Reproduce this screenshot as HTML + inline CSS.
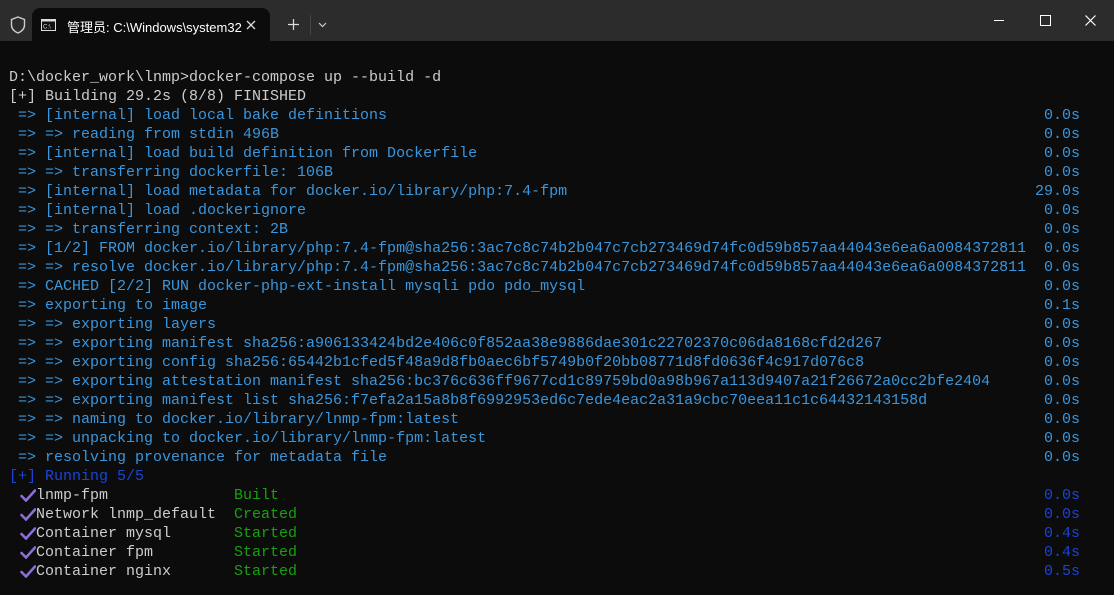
<!DOCTYPE html>
<html><head><meta charset="utf-8"><style>
html,body{margin:0;padding:0;background:#0c0c0c;width:1114px;height:595px;overflow:hidden}
#tb{position:absolute;left:0;top:0;width:1114px;height:41px;background:#2c2c2c}
#tab{position:absolute;left:32px;top:8px;width:238px;height:33px;background:#0c0c0c;border-radius:8px 8px 0 0}
.t{position:absolute;font-family:"Liberation Sans","Noto Sans CJK SC",sans-serif;font-size:13px;color:#fff}
#term{position:absolute;left:0;top:68px;width:1114px;font-family:"Liberation Mono",monospace;font-size:15px;line-height:19px;color:#cccccc}
.r{position:relative;height:19px;white-space:pre;padding-left:9px}
.b{color:#3a96dd}.d{color:#1a44d6}.g{color:#16a10e}
.tm{position:absolute;right:34px;top:0}
.ck{position:absolute;left:20px;top:3px}
.st{position:absolute;left:234px;top:0}
</style></head><body>
<div id="tb">
<svg style="position:absolute;left:10px;top:16px" width="16" height="18" viewBox="0 0 16 18"><path d="M8 1 L14.5 3.5 V9 C14.5 13 11.5 15.5 8 17 C4.5 15.5 1.5 13 1.5 9 V3.5 Z" fill="none" stroke="#ccc" stroke-width="1.4"/></svg>
<div id="tab"></div>
<svg style="position:absolute;left:41px;top:19px" width="15" height="12" viewBox="0 0 15 12"><rect x="0.5" y="0.5" width="14" height="11" fill="#111" stroke="#ddd"/><rect x="0.5" y="0.5" width="14" height="2" fill="#ddd"/><text x="2" y="9.5" font-size="6" fill="#ddd" font-family="Liberation Sans">C:\</text></svg>
<div class="t" style="left:67px;top:17px">管理员: C:\Windows\system32</div>
<svg style="position:absolute;left:246px;top:20px" width="10" height="10"><path d="M1 1L9 9M9 1L1 9" stroke="#ddd" stroke-width="1.3"/></svg>
<svg style="position:absolute;left:288px;top:19px" width="11" height="11"><path d="M5.5 0V11M0 5.5H11" stroke="#ddd" stroke-width="1.2"/></svg>
<div style="position:absolute;left:310px;top:15px;width:1px;height:20px;background:#444"></div>
<svg style="position:absolute;left:318px;top:22px" width="9" height="6"><path d="M1 1L4.5 4.5L8 1" fill="none" stroke="#ccc" stroke-width="1.2"/></svg>
<div style="position:absolute;left:994px;top:20px;width:10px;height:1px;background:#fff"></div>
<div style="position:absolute;left:1040px;top:15px;width:9px;height:9px;border:1px solid #fff"></div>
<svg style="position:absolute;left:1085px;top:15px" width="11" height="11"><path d="M0.5 0.5L10.5 10.5M10.5 0.5L0.5 10.5" stroke="#fff" stroke-width="1.2"/></svg>
</div>
<div id="term">
<div class="r">D:\docker_work\lnmp&gt;docker-compose up --build -d</div>
<div class="r">[+] Building 29.2s (8/8) FINISHED</div>
<div class="r b"> =&gt; [internal] load local bake definitions<span class="tm">0.0s</span></div>
<div class="r b"> =&gt; =&gt; reading from stdin 496B<span class="tm">0.0s</span></div>
<div class="r b"> =&gt; [internal] load build definition from Dockerfile<span class="tm">0.0s</span></div>
<div class="r b"> =&gt; =&gt; transferring dockerfile: 106B<span class="tm">0.0s</span></div>
<div class="r b"> =&gt; [internal] load metadata for docker.io/library/php:7.4-fpm<span class="tm">29.0s</span></div>
<div class="r b"> =&gt; [internal] load .dockerignore<span class="tm">0.0s</span></div>
<div class="r b"> =&gt; =&gt; transferring context: 2B<span class="tm">0.0s</span></div>
<div class="r b"> =&gt; [1/2] FROM docker.io/library/php:7.4-fpm@sha256:3ac7c8c74b2b047c7cb273469d74fc0d59b857aa44043e6ea6a0084372811<span class="tm">0.0s</span></div>
<div class="r b"> =&gt; =&gt; resolve docker.io/library/php:7.4-fpm@sha256:3ac7c8c74b2b047c7cb273469d74fc0d59b857aa44043e6ea6a0084372811<span class="tm">0.0s</span></div>
<div class="r b"> =&gt; CACHED [2/2] RUN docker-php-ext-install mysqli pdo pdo_mysql<span class="tm">0.0s</span></div>
<div class="r b"> =&gt; exporting to image<span class="tm">0.1s</span></div>
<div class="r b"> =&gt; =&gt; exporting layers<span class="tm">0.0s</span></div>
<div class="r b"> =&gt; =&gt; exporting manifest sha256:a906133424bd2e406c0f852aa38e9886dae301c22702370c06da8168cfd2d267<span class="tm">0.0s</span></div>
<div class="r b"> =&gt; =&gt; exporting config sha256:65442b1cfed5f48a9d8fb0aec6bf5749b0f20bb08771d8fd0636f4c917d076c8<span class="tm">0.0s</span></div>
<div class="r b"> =&gt; =&gt; exporting attestation manifest sha256:bc376c636ff9677cd1c89759bd0a98b967a113d9407a21f26672a0cc2bfe2404<span class="tm">0.0s</span></div>
<div class="r b"> =&gt; =&gt; exporting manifest list sha256:f7efa2a15a8b8f6992953ed6c7ede4eac2a31a9cbc70eea11c1c64432143158d<span class="tm">0.0s</span></div>
<div class="r b"> =&gt; =&gt; naming to docker.io/library/lnmp-fpm:latest<span class="tm">0.0s</span></div>
<div class="r b"> =&gt; =&gt; unpacking to docker.io/library/lnmp-fpm:latest<span class="tm">0.0s</span></div>
<div class="r b"> =&gt; resolving provenance for metadata file<span class="tm">0.0s</span></div>
<div class="r d">[+] Running 5/5</div>
<div class="r"><svg class="ck" width="16" height="13"><path d="M1.5 7L6 11.5L15 1.5" fill="none" stroke="#8b6fd6" stroke-width="2.6" stroke-linecap="round"/></svg><span style="position:absolute;left:36px">lnmp-fpm</span><span class="st g">Built</span><span class="tm d">0.0s</span></div>
<div class="r"><svg class="ck" width="16" height="13"><path d="M1.5 7L6 11.5L15 1.5" fill="none" stroke="#8b6fd6" stroke-width="2.6" stroke-linecap="round"/></svg><span style="position:absolute;left:36px">Network lnmp_default</span><span class="st g">Created</span><span class="tm d">0.0s</span></div>
<div class="r"><svg class="ck" width="16" height="13"><path d="M1.5 7L6 11.5L15 1.5" fill="none" stroke="#8b6fd6" stroke-width="2.6" stroke-linecap="round"/></svg><span style="position:absolute;left:36px">Container mysql</span><span class="st g">Started</span><span class="tm d">0.4s</span></div>
<div class="r"><svg class="ck" width="16" height="13"><path d="M1.5 7L6 11.5L15 1.5" fill="none" stroke="#8b6fd6" stroke-width="2.6" stroke-linecap="round"/></svg><span style="position:absolute;left:36px">Container fpm</span><span class="st g">Started</span><span class="tm d">0.4s</span></div>
<div class="r"><svg class="ck" width="16" height="13"><path d="M1.5 7L6 11.5L15 1.5" fill="none" stroke="#8b6fd6" stroke-width="2.6" stroke-linecap="round"/></svg><span style="position:absolute;left:36px">Container nginx</span><span class="st g">Started</span><span class="tm d">0.5s</span></div>
</div>
</body></html>
